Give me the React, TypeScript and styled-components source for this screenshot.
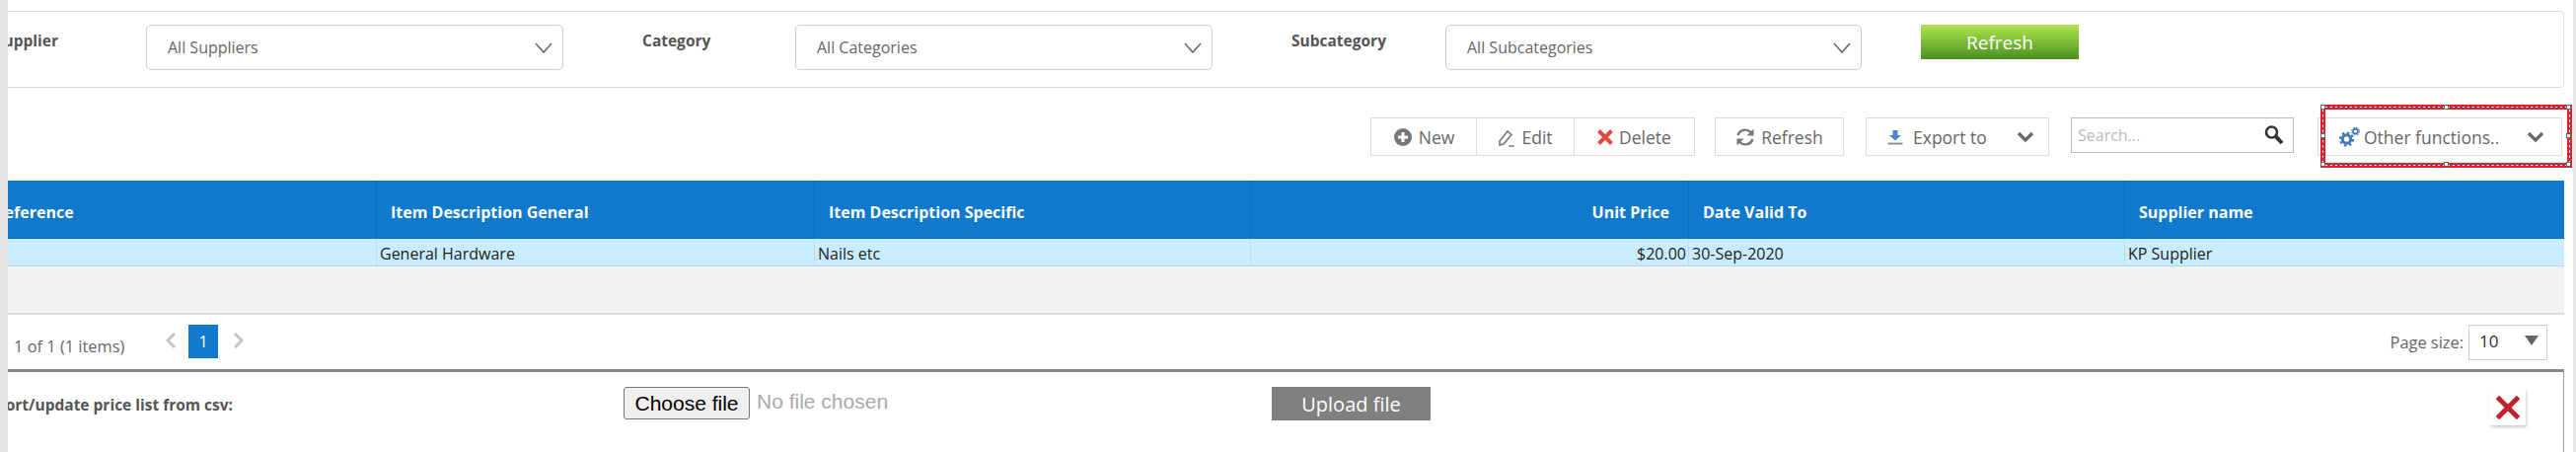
import React from "react";
import styled, { createGlobalStyle } from "styled-components";

const Global = createGlobalStyle`
  html, body { margin: 0; padding: 0; background: #fff; overflow: hidden; }
  #root { width: 2611px; height: 458px; }
  * { box-sizing: border-box; }
`;
const Page = styled.div`
  display: flex; width: 2611px; height: 458px;
  font-family: "Open Sans", "Liberation Sans", sans-serif; color: #666;
`;
const Gutter = styled.div`width: 8px; flex: none; background: #e6e6e6;`;
const Scrollbar = styled.div`width: 3px; flex: none; background: #e8e8e8;`;
const Viewport = styled.div`flex: 1; overflow: hidden; min-width: 0;`;
const Content = styled.div`width: 2631px; margin-left: -40px; padding-top: 11px;`;

const FilterPanel = styled.div`
  height: 78px; border: 1px solid #ddd; border-radius: 4px; display: flex;
  align-items: flex-start; padding: 13px 0 0 26px;
`;
const FilterLabel = styled.label<{ $w: number; $ml?: number }>`
  width: ${p => p.$w}px; margin-left: ${p => p.$ml ?? 0}px; flex: none; font-size: 15.5px; font-weight: 700;
  color: #555; line-height: 20px; padding-top: 6px;
`;
const FilterSelect = styled.div<{ $w: number }>`
  width: ${p => p.$w}px; height: 46px; flex: none; border: 1px solid #ccc; border-radius: 5px; display: flex;
  align-items: center; justify-content: space-between; padding: 0 8px 0 21px; font-size: 16px; color: #666;
`;
const GreenButton = styled.button`
  width: 160px; height: 35px; margin-left: 60px; border: 0; flex: none; color: #fff; font: 19px "Open Sans", sans-serif; padding: 0;
  background: linear-gradient(#aee650, #4a9020);
`;

const Toolbar = styled.div`
  height: 39px; margin-top: 30px; display: flex; justify-content: flex-end; align-items: flex-start; padding-right: 2px;
`;
const Group = styled.div`display: flex; height: 39px; border: 1px solid #ddd; flex: none; margin-right: 20px;`;
const GroupButton = styled.div<{ $w: number }>`
  width: ${p => p.$w}px; display: flex; align-items: center; justify-content: center; gap: 6px; font-size: 17.5px; padding-top: 1px;
  & + & { border-left: 1px solid #ddd; }
`;
const ToolButton = styled.div<{ $w: number; $ml?: number; $pad?: string; $center?: boolean }>`
  width: ${p => p.$w}px; margin-left: ${p => p.$ml ?? 0}px; height: 39px; flex: none; border: 1px solid #ddd; display: flex;
  align-items: center; font-size: 17.5px; position: relative; padding: ${p => p.$pad ?? "0"};
  justify-content: ${p => (p.$center ? "center" : "flex-start")}; gap: ${p => (p.$center ? "6px" : "0")};
`;
const ToolSpread = styled.span<{ $ml: number }>`margin-left: ${p => p.$ml}px; flex: 1; padding-top: 1px;`;
const SearchBox = styled.div`
  width: 226px; height: 36px; margin-left: 22px; flex: none; border: 1px solid #bbb; display: flex; align-items: center;
  justify-content: space-between; padding: 0 8px 0 6px; font-size: 16px; color: #bbb;
`;
const Selection = styled.div`
  position: absolute; left: 2px; right: -11px; top: -14px; bottom: -13px; border: 5px solid #ed1c24; pointer-events: none;
`;
const SelectionLine = styled.div`
  position: absolute; inset: -3px; border: 1px solid #fff;
  &::after { content: ""; position: absolute; inset: -1px; border: 1px dashed #2a5fb0; }
`;
const Handle = styled.i<{ $x: string; $y: string }>`
  position: absolute; z-index: 1; width: 5px; height: 5px; background: #fff; border: 1px solid #666;
  left: ${p => p.$x}; top: ${p => p.$y}; margin: -3px 0 0 -3px;
`;

const GridRow = styled.div<{ $head?: boolean }>`
  display: grid; grid-template-columns: 413px 444px 442px 444px 442px 445px;
  height: ${p => (p.$head ? 59 : 28)}px; margin-top: ${p => (p.$head ? 25 : 0)}px;
  background: ${p => (p.$head ? "#0f79cd" : "#c9edfe")};
  border-bottom: 1px solid ${p => (p.$head ? "#0a6ab5" : "#b4d8e8")};
  color: ${p => (p.$head ? "#fff" : "#222")};
`;
const HeadCell = styled.div<{ $pad?: number; $right?: boolean }>`
  padding: 21px 19px 0 ${p => p.$pad ?? 14}px; font-size: 16px; font-weight: 700; line-height: 22px;
  text-align: ${p => (p.$right ? "right" : "left")};
  & + & { border-left: 1px solid #0d6db9; }
`;
const Cell = styled.div<{ $right?: boolean }>`
  padding: 5px 2px 0 3px; font-size: 16px; line-height: 20px; white-space: nowrap;
  text-align: ${p => (p.$right ? "right" : "left")};
  & + & { border-left: 1px solid #b8dff0; }
`;
const EmptyArea = styled.div`height: 49px; background: #f3f3f3; border-bottom: 2px solid #ddd;`;

const Pager = styled.div`height: 55px; display: flex; align-items: flex-start; padding: 10px 17px 0 46px;`;
const PagerInfo = styled.span`font-size: 16.4px; line-height: 22px; margin-top: 11px; width: 153px; flex: none;`;
const PageArrow = styled.span<{ $w: number; $ml?: number }>`
  width: ${p => p.$w}px; margin-left: ${p => p.$ml ?? 0}px; height: 32px; display: flex; align-items: center; flex: none;
`;
const PageCurrent = styled.span`
  width: 30px; height: 34px; flex: none; background: #0f79cd; color: #fff; font-size: 16px; display: flex; align-items: center; justify-content: center;
`;
const PageSize = styled.div`margin-left: auto; display: flex; align-items: flex-start;`;
const PageSizeLabel = styled.span`font-size: 16.4px; line-height: 22px; margin-top: 7px; margin-right: 5px;`;
const PageSelect = styled.div`
  width: 80px; height: 36px; border: 1px solid #ccc; display: flex; align-items: center; justify-content: space-between;
  padding: 0 8px 4px 10px; font-size: 17px; color: #333;
`;
const Caret = styled.span`
  width: 0; height: 0; border-left: 7px solid transparent; border-right: 7px solid transparent; border-top: 10px solid #666;
`;

const ImportSection = styled.div`
  height: 84px; border-top: 3px solid #888; border-right: 1px solid #999; display: flex; align-items: flex-start; padding-top: 15px;
`;
const ImportLabel = styled.label`
  width: 664px; flex: none; padding: 7px 396px 0 0; text-align: right; font-size: 15.5px; font-weight: 700; color: #555; white-space: nowrap; line-height: 22px;
`;
const ChooseButton = styled.button`
  width: 128px; height: 33px; flex: none; padding: 0; font: 21px "Liberation Sans", Arial, sans-serif; color: #000; background: #efefef;
  border: 1px solid #767676; border-radius: 3px;
`;
const NoFile = styled.span`
  width: 529px; flex: none; padding-left: 7px; font: 21px/30px "Liberation Sans", Arial, sans-serif; color: #aaa;
`;
const UploadButton = styled.button`
  width: 161px; height: 34px; flex: none; background: #808080; border: 0; color: #fff; font: 20px "Open Sans", sans-serif; padding: 0;
`;
const CloseButton = styled.button`
  width: 37px; height: 37px; flex: none; margin: 2px 0 0 1073px; padding: 0; border: 0; background: #fff; border-radius: 2px;
  box-shadow: 1px 2px 3px rgba(0,0,0,.2); display: flex; align-items: center; justify-content: center;
`;

const Chevron = () => (
  <svg width="22" height="22" viewBox="0 0 22 22"><path d="M3 7 L11 16 L19 7" fill="none" stroke="#666" strokeWidth="1.5" /></svg>
);
const BoldChevron = () => (
  <svg width="18" height="12" viewBox="0 0 18 12"><path d="M2 2 L9 9 L16 2" fill="none" stroke="#666" strokeWidth="3.2" /></svg>
);
const PlusCircle = () => (
  <svg width="20" height="20" viewBox="0 0 20 20"><circle cx="10" cy="10" r="9" fill="#777" /><path d="M10 5v10M5 10h10" stroke="#fff" strokeWidth="3" /></svg>
);
const Pencil = () => (
  <svg width="18" height="20" viewBox="0 0 18 20"><path d="M2 14 L10 4 L14 7.5 L6 17 L2 18 Z" fill="none" stroke="#777" strokeWidth="1.6" /><path d="M11 19h6" stroke="#777" strokeWidth="1.4" /></svg>
);
const RedX = ({ size = 16, c = "#e04b3f", w = 4 }: { size?: number; c?: string; w?: number }) => (
  <svg width={size} height={size} viewBox="0 0 16 16"><path d="M1.5 1.5 L14.5 14.5 M14.5 1.5 L1.5 14.5" stroke={c} strokeWidth={w} /></svg>
);
const RefreshIcon = () => (
  <svg width="20" height="20" viewBox="0 0 20 20" fill="none" stroke="#777" strokeWidth="2.4">
    <path d="M2.5 8 A7.8 7.8 0 0 1 15.5 5" /><path d="M17.5 12 A7.8 7.8 0 0 1 4.5 15" />
    <path d="M18.5 1.5v7h-7z" fill="#777" stroke="none" /><path d="M1.5 18.5v-7h7z" fill="#777" stroke="none" />
  </svg>
);
const ExportIcon = () => (
  <svg width="16" height="16" viewBox="0 0 16 16"><path d="M5.5 1h5v5h3.5L8 11.5 2 6h3.5z" fill="#4a86c5" /><path d="M.5 14.5h15" stroke="#888" strokeWidth="1.8" /></svg>
);
const SearchIcon = () => (
  <svg width="22" height="22" viewBox="0 0 22 22" fill="none"><circle cx="8.5" cy="8" r="5.5" stroke="#333" strokeWidth="2.6" /><path d="M12.5 12 L19 19" stroke="#333" strokeWidth="4" /></svg>
);
const Gears = () => (
  <svg width="22" height="22" viewBox="0 0 22 22" fill="none" stroke="#3f78b8">
    <circle cx="8.5" cy="13" r="4.2" strokeWidth="3" />
    <circle cx="8.5" cy="13" r="6.6" strokeWidth="2" strokeDasharray="2.6 2.6" />
    <circle cx="17.5" cy="5" r="2.4" strokeWidth="1.6" />
    <circle cx="17.5" cy="5" r="3.8" strokeWidth="1.2" strokeDasharray="1.5 1.5" />
  </svg>
);
const PageChevron = ({ dir }: { dir: "l" | "r" }) => (
  <svg width="12" height="16" viewBox="0 0 12 16"><path d={dir === "l" ? "M10 1 L3 8 L10 15" : "M2 1 L9 8 L2 15"} fill="none" stroke="#c4c4c4" strokeWidth="3" /></svg>
);

const handles: [string, string][] = [
  ["0", "0"], ["50%", "0"], ["100%", "0"], ["0", "50%"], ["100%", "50%"], ["0", "100%"], ["50%", "100%"], ["100%", "100%"],
];

export default function App() {
  return (
    <Page>
      <Global />
      <Gutter />
      <Viewport>
        <Content>
          <FilterPanel>
            <FilterLabel $w={153}>Supplier</FilterLabel>
            <FilterSelect $w={423}>All Suppliers<Chevron /></FilterSelect>
            <FilterLabel $w={155} $ml={80}>Category</FilterLabel>
            <FilterSelect $w={423}>All Categories<Chevron /></FilterSelect>
            <FilterLabel $w={156} $ml={80}>Subcategory</FilterLabel>
            <FilterSelect $w={422}>All Subcategories<Chevron /></FilterSelect>
            <GreenButton>Refresh</GreenButton>
          </FilterPanel>
          <Toolbar>
            <Group>
              <GroupButton $w={106}><PlusCircle />New</GroupButton>
              <GroupButton $w={99}><Pencil />Edit</GroupButton>
              <GroupButton $w={122}><RedX />Delete</GroupButton>
            </Group>
            <ToolButton $w={131} $center><RefreshIcon />Refresh</ToolButton>
            <ToolButton $w={186} $ml={22} $pad="0 14px 0 21px">
              <ExportIcon /><ToolSpread $ml={10}>Export to</ToolSpread><BoldChevron />
            </ToolButton>
            <SearchBox>Search...<SearchIcon /></SearchBox>
            <ToolButton $w={248} $ml={24} $pad="0 17px 0 20px">
              <Gears /><ToolSpread $ml={4}>Other functions..</ToolSpread><BoldChevron />
              <Selection>
                <SelectionLine>
                  {handles.map(([x, y]) => <Handle key={x + y} $x={x} $y={y} />)}
                </SelectionLine>
              </Selection>
            </ToolButton>
          </Toolbar>
          <GridRow $head>
            <HeadCell $pad={26}>Reference</HeadCell>
            <HeadCell>Item Description General</HeadCell>
            <HeadCell>Item Description Specific</HeadCell>
            <HeadCell $right>Unit Price</HeadCell>
            <HeadCell>Date Valid To</HeadCell>
            <HeadCell>Supplier name</HeadCell>
          </GridRow>
          <GridRow>
            <Cell />
            <Cell>General Hardware</Cell>
            <Cell>Nails etc</Cell>
            <Cell $right>$20.00</Cell>
            <Cell>30-Sep-2020</Cell>
            <Cell>KP Supplier</Cell>
          </GridRow>
          <EmptyArea />
          <Pager>
            <PagerInfo>1 of 1 (1 items)</PagerInfo>
            <PageArrow $w={24}><PageChevron dir="l" /></PageArrow>
            <PageCurrent>1</PageCurrent>
            <PageArrow $w={24} $ml={15}><PageChevron dir="r" /></PageArrow>
            <PageSize>
              <PageSizeLabel>Page size:</PageSizeLabel>
              <PageSelect>10<Caret /></PageSelect>
            </PageSize>
          </Pager>
          <ImportSection>
            <ImportLabel>Import/update price list from csv:</ImportLabel>
            <ChooseButton>Choose file</ChooseButton>
            <NoFile>No file chosen</NoFile>
            <UploadButton>Upload file</UploadButton>
            <CloseButton><RedX size={26} c="#c3202f" w={3} /></CloseButton>
          </ImportSection>
        </Content>
      </Viewport>
      <Scrollbar />
    </Page>
  );
}
